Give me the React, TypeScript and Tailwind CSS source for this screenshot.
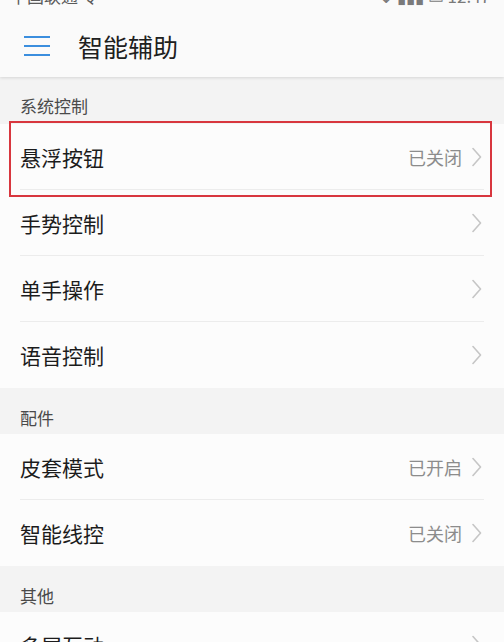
import React from 'react';

type Item = { label: string; value?: string };

const systemItems: Item[] = [
  { label: '悬浮按钮', value: '已关闭' },
  { label: '手势控制' },
  { label: '单手操作' },
  { label: '语音控制' },
];

const accessoryItems: Item[] = [
  { label: '皮套模式', value: '已开启' },
  { label: '智能线控', value: '已关闭' },
];

const otherItems: Item[] = [{ label: '多屏互动' }];

function Chevron() {
  return (
    <svg width="10" height="20" viewBox="0 0 10 20" fill="none">
      <path d="M1 1.5 L8.5 10 L1 18.5" stroke="#c6c6c6" strokeWidth="1.6" strokeLinecap="round" strokeLinejoin="round" />
    </svg>
  );
}

function SectionTitle({ title, first }: { title: string; first?: boolean }) {
  return (
    <div className={first ? 'h-[47px] pt-[20px] px-[20px]' : 'h-[46px] pt-[21px] px-[20px]'}>
      <p className="text-[17px] leading-[17px] text-[#4a4a4a]">{title}</p>
    </div>
  );
}

function Row({ item, last }: { item: Item; last?: boolean }) {
  return (
    <div
      className={
        'mx-[20px] h-[66px] flex items-center justify-between ' +
        (last ? '' : 'border-b border-[#ececec]')
      }
    >
      <span className="text-[21px] leading-[24px] text-[#1c1c1c]">{item.label}</span>
      <div className="flex items-center gap-[10px] pr-[2px]">
        {item.value && <span className="text-[18px] leading-[20px] text-[#8c8c8c]">{item.value}</span>}
        <Chevron />
      </div>
    </div>
  );
}

function Group({ items }: { items: Item[] }) {
  return (
    <div className="bg-[#fcfcfc]">
      {items.map((item, i) => (
        <Row key={item.label} item={item} last={i === items.length - 1} />
      ))}
    </div>
  );
}

export default function App() {
  return (
    <div
      className="min-h-screen w-full bg-[#f3f3f3] overflow-hidden"
      style={{ fontFamily: '"Noto Sans CJK SC", "Noto Sans", sans-serif' }}
    >
      <div className="relative z-10 bg-[#fafafa] shadow-[0_1px_3px_rgba(0,0,0,0.12)]">
        {/* status bar, mostly cut off */}
        <div className="h-[14px] overflow-hidden px-[10px] flex justify-between">
          <span className="-mt-[14px] text-[17px] leading-[20px] text-[#5a5a5a]">中国联通 令</span>
          <span className="-mt-[14px] text-[17px] leading-[20px] text-[#7a7a7a] pr-[4px]">◔ ⇣ ▮▮▮ ▭ 12:47</span>
        </div>
        <div className="h-[63px] flex items-center px-[24px] gap-[28px]">
          <svg width="26" height="22" viewBox="0 0 26 22" fill="none">
            <path d="M0 2h26M0 11h26M0 20h26" stroke="#3b8ede" strokeWidth="2.2" />
          </svg>
          <h1 className="text-[25px] leading-[30px] text-[#202020]">智能辅助</h1>
        </div>
      </div>

      <SectionTitle title="系统控制" first />
      <div className="relative">
        <Group items={systemItems} />
        <div className="absolute left-[9px] right-[12px] top-[-3px] h-[76px] border-2 border-[#d8363e] pointer-events-none" />
      </div>

      <SectionTitle title="配件" />
      <Group items={accessoryItems} />

      <SectionTitle title="其他" />
      <Group items={otherItems} />
    </div>
  );
}
